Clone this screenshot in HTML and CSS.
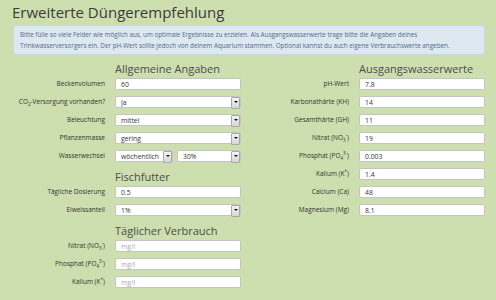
FILE: index.html
```html
<!DOCTYPE html>
<html lang="de">
<head>
  <meta charset="UTF-8">
  <title>Erweiterte Düngerempfehlung</title>
  <link rel="stylesheet" href="styles.css">
</head>
<body>
  <div class="page">
    <h1>Erweiterte Düngerempfehlung</h1>

    <div class="info">
      Bitte fülle so viele Felder wie möglich aus, um optimale Ergebnisse zu erzielen. Als Ausgangswasserwerte trage bitte die Angaben deines<br>
      Trinkwasserversorgers ein. Der pH-Wert sollte jedoch von deinem Aquarium stammen. Optional kannst du auch eigene Verbrauchswerte angeben.
    </div>

    <div class="columns">
      <!-- linke Spalte -->
      <div class="col">
        <h2>Allgemeine Angaben</h2>
        <div class="row">
          <label>Beckenvolumen</label>
          <input type="text" value="60">
        </div>
        <div class="row">
          <label>CO<sub>2</sub>-Versorgung vorhanden?</label>
          <div class="sel"><select><option>Ja</option></select></div>
        </div>
        <div class="row">
          <label>Beleuchtung</label>
          <div class="sel"><select><option>mittel</option></select></div>
        </div>
        <div class="row">
          <label>Pflanzenmasse</label>
          <div class="sel"><select><option>gering</option></select></div>
        </div>
        <div class="row">
          <label>Wasserwechsel</label>
          <div class="pair">
            <div class="sel"><select><option>wöchentlich</option></select></div>
            <div class="sel"><select><option>30%</option></select></div>
          </div>
        </div>

        <h2>Fischfutter</h2>
        <div class="row">
          <label>Tägliche Dosierung</label>
          <input type="text" value="0.5">
        </div>
        <div class="row">
          <label>Eiweissanteil</label>
          <div class="sel"><select><option>1%</option></select></div>
        </div>

        <h2>Täglicher Verbrauch</h2>
        <div class="row">
          <label>Nitrat (NO<sub>3</sub><sup>-</sup>)</label>
          <input type="text" placeholder="mg/l">
        </div>
        <div class="row">
          <label>Phosphat (PO<sub>4</sub><sup>3-</sup>)</label>
          <input type="text" placeholder="mg/l">
        </div>
        <div class="row">
          <label>Kalium (K<sup>+</sup>)</label>
          <input type="text" placeholder="mg/l">
        </div>
      </div>

      <!-- rechte Spalte -->
      <div class="col">
        <h2>Ausgangswasserwerte</h2>
        <div class="row">
          <label>pH-Wert</label>
          <input type="text" value="7.8">
        </div>
        <div class="row">
          <label>Karbonathärte (KH)</label>
          <input type="text" value="14">
        </div>
        <div class="row">
          <label>Gesamthärte (GH)</label>
          <input type="text" value="11">
        </div>
        <div class="row">
          <label>Nitrat (NO<sub>3</sub><sup>-</sup>)</label>
          <input type="text" value="19">
        </div>
        <div class="row">
          <label>Phosphat (PO<sub>4</sub><sup>3-</sup>)</label>
          <input type="text" value="0.003">
        </div>
        <div class="row">
          <label>Kalium (K<sup>+</sup>)</label>
          <input type="text" value="1.4">
        </div>
        <div class="row">
          <label>Calcium (Ca)</label>
          <input type="text" value="48">
        </div>
        <div class="row">
          <label>Magnesium (Mg)</label>
          <input type="text" value="8.1">
        </div>
      </div>
    </div>
  </div>
</body>
</html>
```

FILE: styles.css
```css
* {
  margin: 0;
  padding: 0;
  box-sizing: border-box;
}
body {
  font-family: "Open Sans", "Liberation Sans", sans-serif;
  background-color: #cddfae;
  color: #333;
}
.page {
  padding: 1px 11px 0 13px;
}
h1 {
  font-size: 15px;
  font-weight: 400;
  color: #3b3b3b;
  line-height: 22px;
  margin-left: -1px;
}
.info {
  margin-top: 2px;
  background-color: #dee8f1;
  border: 1px solid #c8d7e4;
  border-radius: 3px;
  padding: 3px 6px;
  font-size: 6.3px;
  line-height: 11px;
  color: #4e6b8c;
  white-space: nowrap;
}
.columns {
  display: grid;
  grid-template-columns: 228px 228px;
  column-gap: 16px;
  margin-top: 5px;
}
h2 {
  font-size: 11px;
  font-weight: 400;
  color: #4d4d4d;
  line-height: 18px;
  padding-left: 102px;
  white-space: nowrap;
}
.row {
  display: grid;
  grid-template-columns: 92px 1fr;
  column-gap: 10px;
  height: 18px;
}
.row label {
  justify-self: end;
  font-size: 6.5px;
  line-height: 12px;
  color: #333;
  white-space: nowrap;
}
sub, sup {
  font-size: 4.5px;
  line-height: 0;
}
input, select {
  display: block;
  font-family: inherit;
  font-size: 6.8px;
  color: #333;
  height: 12px;
  width: 100%;
  border: 1px solid #c4c4c4;
  border-radius: 2px;
  background: white;
  padding: 0 5px;
  outline: none;
}
input::placeholder {
  color: #aaa;
}
.sel {
  position: relative;
  height: 12px;
}
.sel select {
  appearance: none;
  -webkit-appearance: none;
}
.sel::after {
  content: "";
  position: absolute;
  right: 1px;
  top: 1px;
  width: 7px;
  height: 10px;
  background: linear-gradient(#f4f4f4, #d6d6d6);
  border: 1px solid #a8a8a8;
  border-radius: 1px;
}
.sel::before {
  content: "";
  position: absolute;
  right: 3px;
  top: 5px;
  border-left: 2px solid transparent;
  border-right: 2px solid transparent;
  border-top: 2px solid #111;
  z-index: 1;
}
.pair {
  display: grid;
  grid-template-columns: 58px 1fr;
  column-gap: 4px;
}
```
